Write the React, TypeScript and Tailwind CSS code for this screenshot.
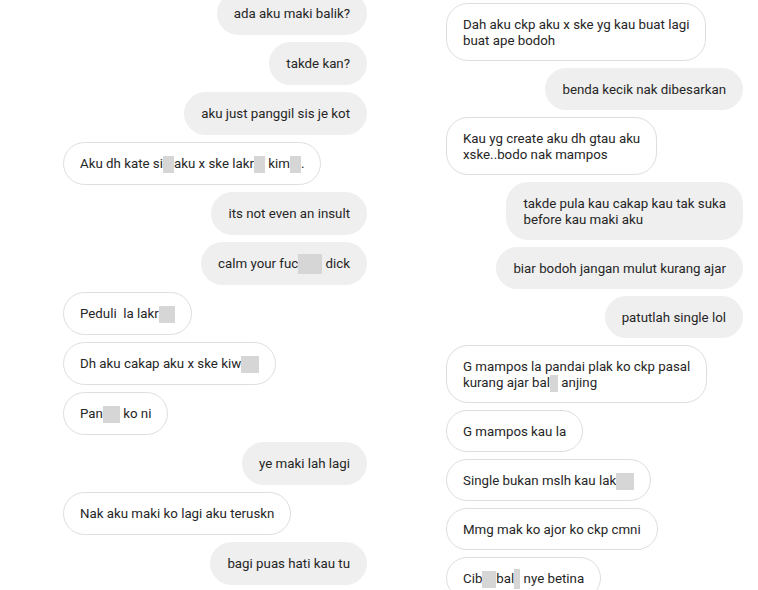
import React from 'react';

type Part = string | { r: number; h?: number };
type Msg = { me: boolean; lines: Part[][] };

// r = width of a redaction block, h = its height
const leftChat: Msg[] = [
  { me: true, lines: [['ada aku maki balik?']] },
  { me: true, lines: [['takde kan?']] },
  { me: true, lines: [['aku just panggil sis je kot']] },
  { me: false, lines: [['Aku dh kate si', { r: 11 }, 'aku x ske lakr', { r: 11 }, ' kim', { r: 11 }, '.']] },
  { me: true, lines: [['its not even an insult']] },
  { me: true, lines: [['calm your fuc', { r: 24, h: 20 }, ' dick']] },
  { me: false, lines: [['Peduli  la lakr', { r: 16 }]] },
  { me: false, lines: [['Dh aku cakap aku x ske kiw', { r: 18 }]] },
  { me: false, lines: [['Pan', { r: 17 }, ' ko ni']] },
  { me: true, lines: [['ye maki lah lagi']] },
  { me: false, lines: [['Nak aku maki ko lagi aku teruskn']] },
  { me: true, lines: [['bagi puas hati kau tu']] },
];

const rightChat: Msg[] = [
  { me: false, lines: [['Dah aku ckp aku x ske yg kau buat lagi'], ['buat ape bodoh']] },
  { me: true, lines: [['benda kecik nak dibesarkan']] },
  { me: false, lines: [['Kau yg create aku dh gtau aku'], ['xske..bodo nak mampos']] },
  { me: true, lines: [['takde pula kau cakap kau tak suka'], ['before kau maki aku']] },
  { me: true, lines: [['biar bodoh jangan mulut kurang ajar']] },
  { me: true, lines: [['patutlah single lol']] },
  { me: false, lines: [['G mampos la pandai plak ko ckp pasal'], ['kurang ajar bal', { r: 8 }, ' anjing']] },
  { me: false, lines: [['G mampos kau la']] },
  { me: false, lines: [['Single bukan mslh kau lak', { r: 18 }]] },
  { me: false, lines: [['Mmg mak ko ajor ko ckp cmni']] },
  { me: false, lines: [['Cib', { r: 14 }, 'bal', { r: 6, h: 20 }, ' nye betina']] },
];

const Bubble = ({ msg, tight }: { msg: Msg; tight?: boolean }) => (
  <div
    className={
      (msg.me
        ? 'self-end border-[#efefef] bg-[#efefef] '
        : 'self-start border-[#dedede] bg-white ') +
      (tight ? 'pb-[11px] ' : 'pb-[12px] ') +
      'rounded-[22px] border px-4 pt-[13px]'
    }
  >
    {msg.lines.map((line, i) => (
      <div key={i} className="h-4 whitespace-pre text-[13.3px] leading-[16px] text-[#262626]">
        {line.map((p, j) =>
          typeof p === 'string' ? (
            <span key={j}>{p}</span>
          ) : (
            <span
              key={j}
              className="-my-2 inline-block bg-[#d6d6d6] align-middle"
              style={{ width: p.r, height: p.h ?? 17 }}
            />
          )
        )}
      </div>
    ))}
  </div>
);

export default function App() {
  return (
    <div className="flex h-[590px] w-[758px] overflow-hidden bg-white font-['Roboto',sans-serif]">
      <div className="-mt-2 flex w-[378px] flex-col gap-[7px] pl-[63px] pr-[11px]">
        {leftChat.map((m, i) => (
          <Bubble key={i} msg={m} />
        ))}
      </div>
      <div className="flex flex-1 flex-col gap-[7px] pt-[3px] pl-[68px] pr-[15px]">
        {rightChat.map((m, i) => (
          <Bubble key={i} msg={m} tight />
        ))}
      </div>
    </div>
  );
}
